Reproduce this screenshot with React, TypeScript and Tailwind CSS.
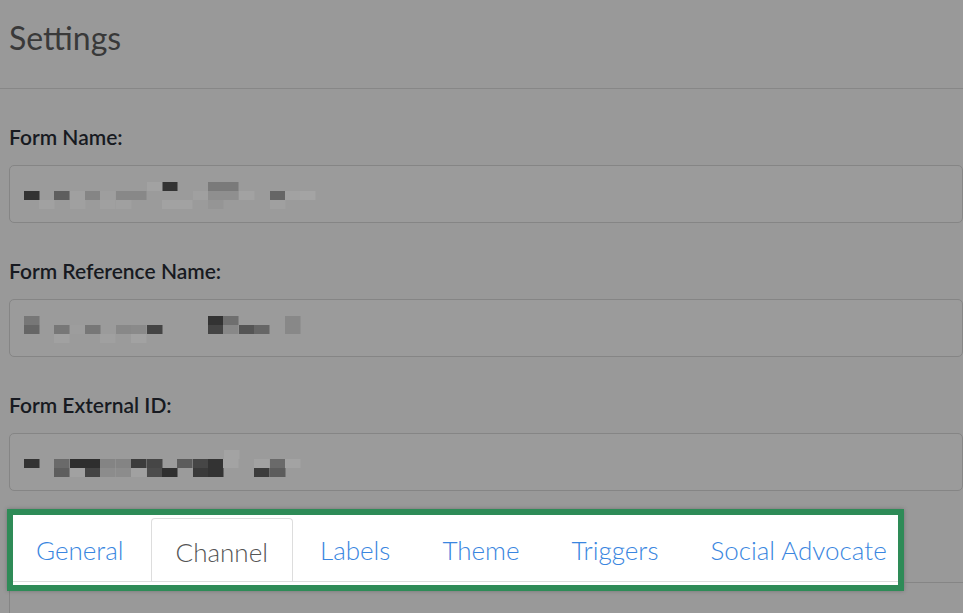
import React from "react";

type Cell = [number, number, string];

const mosaics: Cell[][] = [
  [
    [162, 0, "#333"], [208, 0, "#7a7a7a"], [223, 0, "#7a7a7a"], [147, 0, "#a2a2a2"],
    [24, 1, "#333"], [54, 1, "#5e5e5e"], [70, 1, "#a0a0a0"], [85, 1, "#858585"], [100, 1, "#9e9e9e"],
    [116, 1, "#888"], [131, 1, "#888"], [193, 1, "#a0a0a0"], [208, 1, "#8f8f8f"], [223, 1, "#8f8f8f"],
    [239, 1, "#a2a2a2"], [270, 1, "#666"], [285, 1, "#a2a2a2"], [300, 1, "#a4a4a4"],
    [39, 2, "#a1a1a1"], [70, 2, "#a0a0a0"], [100, 2, "#a0a0a0"], [116, 2, "#a0a0a0"],
    [162, 2, "#a2a2a2"], [177, 2, "#a2a2a2"], [208, 2, "#959595"], [270, 2, "#a0a0a0"],
  ],
  [
    [24, 0, "#777"], [208, 0, "#333"], [223, 0, "#6f6f6f"], [285, 0, "#888"],
    [24, 1, "#666"], [54, 1, "#777"], [70, 1, "#9d9d9d"], [85, 1, "#777"], [116, 1, "#888"],
    [131, 1, "#8a8a8a"], [147, 1, "#444"], [208, 1, "#444"], [223, 1, "#888"], [239, 1, "#555"],
    [254, 1, "#666"], [285, 1, "#888"],
    [54, 2, "#a1a1a1"], [100, 2, "#a0a0a0"], [131, 2, "#a2a2a2"],
  ],
  [
    [224, 0, "#a3a3a3"],
    [24, 1, "#333"], [54, 1, "#6a6a6a"], [70, 1, "#2e2e2e"], [85, 1, "#2e2e2e"], [100, 1, "#848484"],
    [116, 1, "#848484"], [131, 1, "#3c3c3c"], [147, 1, "#464646"], [177, 1, "#5c5c5c"],
    [193, 1, "#464646"], [208, 1, "#333"], [223, 1, "#a3a3a3"], [254, 1, "#a2a2a2"], [270, 1, "#6a6a6a"],
    [285, 1, "#a3a3a3"],
    [54, 2, "#5e5e5e"], [70, 2, "#a1a1a1"], [85, 2, "#444"], [100, 2, "#8c8c8c"], [116, 2, "#8c8c8c"],
    [131, 2, "#a1a1a1"], [147, 2, "#4c4c4c"], [162, 2, "#2f2f2f"], [193, 2, "#3a3a3a"], [208, 2, "#333"],
    [254, 2, "#3c3c3c"], [270, 2, "#5c5c5c"],
  ],
];

function Mosaic({ cells }: { cells: Cell[] }) {
  return (
    <svg width="320" height="30" viewBox="0 0 320 30" className="block">
      {cells.map(([x, r, c], i) => (
        <rect key={i} x={x - 20} y={r * 9 + 1} width={15.5} height={9} fill={c} />
      ))}
    </svg>
  );
}

function Field({ label, cells }: { label: string; cells: Cell[] }) {
  return (
    <div className="flex flex-col">
      <div className="h-[38px] whitespace-nowrap text-[21px] font-semibold leading-[20px] text-[#171a21]">{label}</div>
      <div className="flex h-[58px] items-start rounded-[5px] border border-[#858585] bg-[#9b9b9b] pl-[10px] pt-[15px]">
        <Mosaic cells={cells} />
      </div>
    </div>
  );
}

const tabs = ["General", "Channel", "Labels", "Theme", "Triggers", "Social Advocate"];

export default function App() {
  return (
    <div
      className="h-[613px] w-[963px] overflow-hidden bg-[#999999]"
      style={{ fontFamily: "Lato, 'Open Sans', sans-serif" }}
    >
      <div className="flex h-[89px] items-start border-b border-[#878787] pl-[9px] pt-[18px]">
        <h1 className="text-[32px] leading-[40px] text-[#393939]">Settings</h1>
      </div>
      <div className="flex flex-col gap-[38px] pl-[9px] pt-[38px]">
        <Field label="Form Name:" cells={mosaics[0]} />
        <Field label="Form Reference Name:" cells={mosaics[1]} />
        <Field label="Form External ID:" cells={mosaics[2]} />
      </div>
      <div className="mt-[18px] flex items-start">
        <div className="ml-[7px] h-[82px] w-[897px] shrink-0 border-[6px] border-[#2e8b57] bg-white shadow-[0_0_4px_rgba(0,0,0,0.25)]">
          <div className="flex h-[67px] items-end overflow-hidden border-b border-[#dddddd]">
            {tabs.map((t, i) => (
              <div
                key={t}
                className={
                  i === 1
                    ? "relative -mb-px mr-[2px] flex h-[64px] shrink-0 items-center whitespace-nowrap rounded-t-[4px] border border-b-0 border-[#dddddd] bg-white px-[24px] pt-[2px] text-[26px] font-light text-[#555555]"
                    : "mr-[2px] flex h-[64px] shrink-0 items-center whitespace-nowrap border border-transparent px-[24px] pt-[2px] text-[26px] font-light text-[#3a86e0] " +
                      (i === 0 ? "ml-[-2px]" : "")
                }
              >
                <span className="leading-[30px]">{t}</span>
              </div>
            ))}
          </div>
        </div>
        <div className="mt-[73px] h-px flex-1 bg-[#858585]" />
      </div>
      <div className="ml-[9px] h-[40px] w-px bg-[#858585]" />
    </div>
  );
}
